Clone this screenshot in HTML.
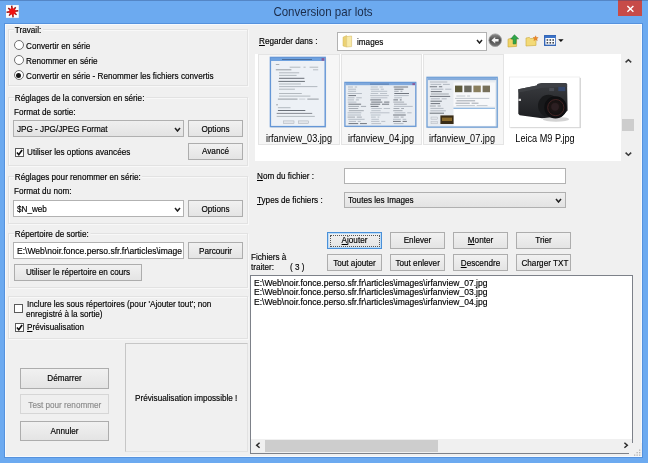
<!DOCTYPE html>
<html lang="fr">
<head>
<meta charset="utf-8">
<title>Conversion par lots</title>
<style>
html,body{margin:0;padding:0;}
body{width:648px;height:463px;overflow:hidden;background:#6caaf0;position:relative;
 font-family:"Liberation Sans","DejaVu Sans",sans-serif;font-size:9.8px;color:#000;}
.abs,.t,.btn,.grp,.fld,.rb,.cb{position:absolute;box-sizing:border-box;}
#win{position:absolute;left:0;top:0;width:648px;height:463px;background:#6caaf0;overflow:hidden;will-change:transform;}
#client{position:absolute;left:5px;top:24px;width:637px;height:433px;background:#f0f0f0;box-shadow:inset 0 0 0 1px #f6fafe, 0 0 0 1px #5592de;}
#title{position:absolute;left:-1px;top:3.8px;width:648px;text-align:center;font-size:12.8px;color:#1b2c4a;transform:scaleX(.9);white-space:nowrap;}
#close{position:absolute;left:618.4px;top:0;width:23.8px;height:15.6px;background:#c74b48;z-index:2;}
.t{-webkit-text-stroke:.18px #000;white-space:nowrap;line-height:13px;font-size:9.8px;transform:scaleX(0.832);transform-origin:0 0;}
.grp{border:1px solid #e2e2e2;box-shadow:inset 1px 1px 0 #f8f8f8, 1px 1px 0 #f8f8f8;}
.btn{border:1px solid #adadad;background:linear-gradient(#f1f1f1,#e4e4e4);white-space:nowrap;font-size:9.8px;line-height:13px;}
.btn span{-webkit-text-stroke:.18px currentColor;position:absolute;left:0;width:100%;text-align:center;transform:scaleX(0.832);}
.btn.dis{border-color:#d6d6d6;background:#efefef;color:#8c8c8c;}
.btn.foc{border-color:#4a90d8;box-shadow:inset 0 0 0 1px #bcdcf8;}
.btn.foc::after{content:"";position:absolute;left:1.5px;top:1.5px;right:1.5px;bottom:1.5px;border:1px dotted #555;}
.fld{border:1px solid #b2b2b2;background:#fff;}
.combo{border:1px solid #b0b0b0;background:linear-gradient(#efefef,#e3e3e3);}
.rb{border:1px solid #707070;border-radius:50%;background:#fff;}
.rb.on::after{content:"";position:absolute;left:50%;top:50%;width:5px;height:5px;margin:-2.5px 0 0 -2.5px;border-radius:50%;background:#151515;}
.cb{border:1px solid #5a5a5a;background:#fff;}
u{text-decoration:underline;}
.lbl{font-size:10.4px;line-height:13px;text-align:center;white-space:nowrap;transform:scaleX(.88);color:#000;}
</style>
</head>
<body>
<div id="win">
 <div class="abs" style="left:0;top:0;width:648px;height:1.2px;background:rgba(40,70,120,.35);z-index:3"></div>
 <div id="title">Conversion par lots</div>
 <div id="close"><svg width="23.8" height="15.6" viewBox="0 0 23.8 15.6"><path d="M9.4 5.9 L15.4 11.7 M15.4 5.9 L9.4 11.7" stroke="#fff" stroke-width="1.4" fill="none"/></svg></div>
 <div id="client"></div>
 <div class="grp" style="left:7.5px;top:28.5px;width:240.0px;height:57.0px;"></div>
 <div class="t" style="left:14px;top:22.90px;background:linear-gradient(transparent 4px,#f0f0f0 4px);padding:0 2px 0 1px">Travail:</div>
 <div class="rb" style="left:13.50px;top:40.20px;width:10.2px;height:10.2px"></div>
 <div class="t" style="left:26px;top:38.70px;">Convertir en série</div>
 <div class="rb" style="left:13.50px;top:55.10px;width:10.2px;height:10.2px"></div>
 <div class="t" style="left:26px;top:53.60px;">Renommer en série</div>
 <div class="rb on" style="left:13.50px;top:70.00px;width:10.2px;height:10.2px"></div>
 <div class="t" style="left:26px;top:68.50px;">Convertir en série - Renommer les fichiers convertis</div>
 <div class="grp" style="left:7.5px;top:96.5px;width:240.0px;height:69.0px;"></div>
 <div class="t" style="left:13.7px;top:90.80px;background:linear-gradient(transparent 4px,#f0f0f0 4px);padding:0 2px 0 1px">Réglages de la conversion en série:</div>
 <div class="t" style="left:14px;top:104.90px;">Format de sortie:</div>
 <div class="combo abs" style="left:13px;top:120px;width:171px;height:17px"></div>
 <div class="t" style="left:17px;top:122.40px;">JPG - JPG/JPEG Format</div>
 <svg class="abs" style="left:173.70px;top:126.90px" width="7.00" height="5.00"><path d="M1 1 L3.50 4.00 L6.00 1" stroke="#222" stroke-width="1.5" fill="none"/></svg>
 <div class="btn" style="left:188px;top:120px;width:55.00px;height:17.00px;"><span style="top:1.10px">Options</span></div>
 <div class="cb" style="left:14.6px;top:147.6px;width:9px;height:9px"></div>
 <svg class="abs" style="left:14.6px;top:147.6px" width="9" height="9" viewBox="0 0 10 10"><path d="M2.2 5 L4.2 7.4 L7.9 2.3" stroke="#111" stroke-width="1.8" fill="none"/></svg>
 <div class="t" style="left:27px;top:144.60px;">Utiliser les options avancées</div>
 <div class="btn" style="left:188px;top:143px;width:55.00px;height:17.00px;"><span style="top:0.20px">Avancé</span></div>
 <div class="grp" style="left:7.5px;top:175.5px;width:240.0px;height:48.0px;"></div>
 <div class="t" style="left:14px;top:169.80px;background:linear-gradient(transparent 4px,#f0f0f0 4px);padding:0 2px 0 1px">Réglages pour renommer en série:</div>
 <div class="t" style="left:14px;top:184.30px;">Format du nom:</div>
 <div class="fld" style="left:13px;top:200px;width:171px;height:17px"></div>
 <div class="t" style="left:16.5px;top:201.60px;">$N_web</div>
 <svg class="abs" style="left:173.70px;top:206.50px" width="7.00" height="5.00"><path d="M1 1 L3.50 4.00 L6.00 1" stroke="#222" stroke-width="1.5" fill="none"/></svg>
 <div class="btn" style="left:188px;top:200px;width:55.00px;height:17.00px;"><span style="top:0.90px">Options</span></div>
 <div class="grp" style="left:7.5px;top:232.5px;width:240.0px;height:55.0px;"></div>
 <div class="t" style="left:14px;top:226.70px;background:linear-gradient(transparent 4px,#f0f0f0 4px);padding:0 2px 0 1px">Répertoire de sortie:</div>
 <div class="fld" style="left:13px;top:242px;width:171px;height:17px"></div>
 <div class="t" style="left:16.5px;top:243.50px;transform:scaleX(.872)">E:\Web\noir.fonce.perso.sfr.fr\articles\image</div>
 <div class="btn" style="left:188px;top:242px;width:55.00px;height:17.00px;"><span style="top:0.50px">Parcourir</span></div>
 <div class="btn" style="left:14px;top:264px;width:128.00px;height:17.00px;"><span style="top:0.20px">Utiliser le répertoire en cours</span></div>
 <div class="grp" style="left:7.5px;top:296px;width:240.0px;height:42.5px;"></div>
 <div class="cb" style="left:14.4px;top:304.2px;width:9px;height:9px"></div>
 <div class="t" style="left:27px;top:297.20px;">Inclure les sous répertoires (pour 'Ajouter tout'; non</div>
 <div class="t" style="left:26.2px;top:307.20px;">enregistré à la sortie)</div>
 <div class="cb" style="left:14.6px;top:322.8px;width:9px;height:9px"></div>
 <svg class="abs" style="left:14.6px;top:322.8px" width="9" height="9" viewBox="0 0 10 10"><path d="M2.2 5 L4.2 7.4 L7.9 2.3" stroke="#111" stroke-width="1.8" fill="none"/></svg>
 <div class="t" style="left:27px;top:320.40px;"><u>P</u>révisualisation</div>
 <div class="grp" style="left:124.5px;top:343px;width:123.0px;height:109px;border-color:#c6c6c6 #e2e2e2 #e2e2e2 #c6c6c6;box-shadow:none"></div>
 <div class="t" style="left:135px;top:391.40px;">Prévisualisation impossible !</div>
 <div class="btn" style="left:20px;top:368px;width:89.00px;height:21.00px;"><span style="top:2.40px">Démarrer</span></div>
 <div class="btn dis" style="left:20px;top:394px;width:89.00px;height:20.00px;"><span style="top:2.70px">Test pour renommer</span></div>
 <div class="btn" style="left:20px;top:421px;width:89.00px;height:20.00px;"><span style="top:1.80px">Annuler</span></div>
 <div class="t" style="left:259px;top:34.20px;"><u>R</u>egarder dans :</div>
 <div class="fld" style="left:337px;top:32px;width:149.5px;height:18.6px"></div>
 <div class="t" style="left:357px;top:34.80px;">images</div>
 <svg class="abs" style="left:476.00px;top:39.30px" width="7.00" height="5.00"><path d="M1 1 L3.50 4.00 L6.00 1" stroke="#222" stroke-width="1.5" fill="none"/></svg>
 <div class="t" style="left:256.8px;top:168.90px;"><u>N</u>om du fichier :</div>
 <div class="fld" style="left:344px;top:168.3px;width:221.5px;height:15.7px"></div>
 <div class="t" style="left:256.8px;top:193.20px;"><u>T</u>ypes de fichiers :</div>
 <div class="combo abs" style="left:344px;top:192.2px;width:221.5px;height:16.2px"></div>
 <div class="t" style="left:347.6px;top:193.20px;">Toutes les Images</div>
 <svg class="abs" style="left:555.00px;top:198.20px" width="7.00" height="5.00"><path d="M1 1 L3.50 4.00 L6.00 1" stroke="#222" stroke-width="1.5" fill="none"/></svg>
 <div class="btn foc" style="left:327px;top:232px;width:55.00px;height:17.00px;"><span style="top:0.10px"><u>A</u>jouter</span></div>
 <div class="btn" style="left:390px;top:232px;width:55.00px;height:17.00px;"><span style="top:0.10px">Enlever</span></div>
 <div class="btn" style="left:453px;top:232px;width:55.00px;height:17.00px;"><span style="top:0.10px"><u>M</u>onter</span></div>
 <div class="btn" style="left:516px;top:232px;width:55.00px;height:17.00px;"><span style="top:0.10px">Trier</span></div>
 <div class="btn" style="left:327px;top:254px;width:55.00px;height:17.00px;"><span style="top:0.50px">Tout ajouter</span></div>
 <div class="btn" style="left:390px;top:254px;width:55.00px;height:17.00px;"><span style="top:0.50px">Tout enlever</span></div>
 <div class="btn" style="left:453px;top:254px;width:55.00px;height:17.00px;"><span style="top:0.50px"><u>D</u>escendre</span></div>
 <div class="btn" style="left:516px;top:254px;width:55.00px;height:17.00px;"><span style="top:0.50px">Charger TXT</span></div>
 <div class="t" style="left:250.6px;top:250.20px;">Fichiers à</div>
 <div class="t" style="left:250.6px;top:259.70px;">traiter:</div>
 <div class="t" style="left:290.3px;top:259.90px;">( 3 )</div>
 <div class="fld" style="left:250px;top:275px;width:383px;height:179px;border-color:#7d8189"></div>
 <div class="t" style="left:253.8px;top:275.60px;transform:scaleX(.872)">E:\Web\noir.fonce.perso.sfr.fr\articles\images\irfanview_07.jpg</div>
 <div class="t" style="left:253.8px;top:285.30px;transform:scaleX(.872)">E:\Web\noir.fonce.perso.sfr.fr\articles\images\irfanview_03.jpg</div>
 <div class="t" style="left:253.8px;top:295.00px;transform:scaleX(.872)">E:\Web\noir.fonce.perso.sfr.fr\articles\images\irfanview_04.jpg</div>
 <svg class="abs" style="left:6.3px;top:5px" width="12.8" height="12.9" viewBox="0 0 13 13"><rect width="13" height="13" fill="#fbfbfb"/>
<path d="M6.5 6.5 L5.78 0.54 M6.5 6.5 L2.25 3.17 M6.5 6.5 L0.54 7.22 M6.5 6.5 L3.17 10.75 M6.5 6.5 L7.22 12.46 M6.5 6.5 L10.75 9.83 M6.5 6.5 L12.46 5.78 M6.5 6.5 L9.83 2.25 " stroke="#8c1010" stroke-width="1.5" fill="none"/><path d="M6.5 6.5 L5.78 0.54 M6.5 6.5 L2.25 3.17 M6.5 6.5 L0.54 7.22 M6.5 6.5 L3.17 10.75 M6.5 6.5 L7.22 12.46 M6.5 6.5 L10.75 9.83 M6.5 6.5 L12.46 5.78 M6.5 6.5 L9.83 2.25 " stroke="#e81414" stroke-width="0.9" fill="none" stroke-dasharray="4.3 9"/>
<circle cx="6.5" cy="6.6" r="3.3" fill="#ee1212"/></svg>
 <div class="abs" style="left:254.8px;top:53.5px;width:380px;height:107.3px;background:#fff"></div>
 <div class="abs" style="left:258.2px;top:54px;width:81.8px;height:90.8px;background:#f6f6f6;border:1px solid #e4e4e4"></div>
 <div class="abs" style="left:340.8px;top:54px;width:81.0px;height:90.8px;background:#f6f6f6;border:1px solid #e4e4e4"></div>
 <div class="abs" style="left:422.6px;top:54px;width:81.0px;height:90.8px;background:#f6f6f6;border:1px solid #e4e4e4"></div>
 <svg class="abs" style="left:268px;top:55px;overflow:visible" width="60" height="75" viewBox="268 55 60 75"><rect x="271.2" y="58.4" width="55" height="69.2" fill="#c4c8ce" opacity=".5"/><rect x="270.4" y="57.4" width="54.8" height="69.2" fill="#edf1f6" stroke="#6496d6" stroke-width="1.4"/><rect x="271" y="58" width="53.6" height="3" fill="#6fa2df"/><path d="M282 59.5 H312" stroke="#3c5a86" stroke-width=".9" opacity=".8"/><rect x="321.6" y="58.1" width="2.8" height="2.6" fill="#8a5a9a"/><path d="M275.8 64.5 H279.3" stroke="#8a9098" stroke-width="0.7"/><path d="M289.7 67.2 H300.4" stroke="#9aa0a8" stroke-width="0.7"/><path d="M303.5 67.2 H305.6" stroke="#9aa0a8" stroke-width="0.7"/><path d="M309.6 67.2 H318.2" stroke="#9aa0a8" stroke-width="0.7"/><path d="M275.8 69.8 H291.4" stroke="#80868e" stroke-width="0.8"/><path d="M313.0 69.8 H318.2" stroke="#a0a6ae" stroke-width="0.7"/><path d="M279.0 72.8 H299.2" stroke="#9aa0a8" stroke-width="0.7"/><path d="M279.0 75.4 H296.6" stroke="#9aa0a8" stroke-width="0.7"/><path d="M279.0 78.3 H304.4" stroke="#6a7078" stroke-width="1.0"/><path d="M278.4 81.4 H304.9" stroke="#6a7078" stroke-width="1.0"/><path d="M279.0 84.0 H300.9" stroke="#9aa0a8" stroke-width="0.7"/><path d="M279.0 86.6 H317.4" stroke="#9aa0a8" stroke-width="0.7"/><path d="M279.0 89.2 H294.9" stroke="#9aa0a8" stroke-width="0.7"/><path d="M279.0 93.5 H301.8" stroke="#9aa0a8" stroke-width="0.7"/><path d="M279.0 96.1 H310.4" stroke="#9aa0a8" stroke-width="0.7"/><path d="M277.9 99.1 H297.5" stroke="#80868e" stroke-width="0.8"/><path d="M299.2 99.1 H305.3" stroke="#b0b6be" stroke-width="0.6"/><path d="M307.3 99.1 H318.7" stroke="#80868e" stroke-width="0.8"/><path d="M276.2 104.8 H277.9" stroke="#80868e" stroke-width="0.8"/><path d="M277.9 107.7 H290.5" stroke="#9aa0a8" stroke-width="0.7"/><path d="M277.9 110.5 H305.3" stroke="#6a7078" stroke-width="1.0"/><path d="M276.7 113.4 H312.2" stroke="#7a8088" stroke-width="0.9"/><path d="M276.7 116.4 H314.8" stroke="#9aa0a8" stroke-width="0.7"/><rect x="283.6" y="120.9" width="10.4" height="2.6" fill="#e2e5ea" stroke="#a8aeb6" stroke-width=".5"/><rect x="298.3" y="120.9" width="10.4" height="2.6" fill="#e2e5ea" stroke="#a8aeb6" stroke-width=".5"/></svg>
 <svg class="abs" style="left:343px;top:80.4px;overflow:visible" width="76" height="50" viewBox="343 80 76 50"><rect x="345.6" y="83.4" width="71" height="43.9" fill="#c9ccd0" opacity=".55"/><rect x="344.9" y="82.4" width="70.9" height="43.9" fill="#e9edf2" stroke="#6a9ad6" stroke-width="1.3"/><rect x="345.5" y="83" width="69.7" height="2.2" fill="#7fa8dc"/><path d="M370 84.1 H389" stroke="#3c5a86" stroke-width=".8" opacity=".7"/><rect x="412.4" y="83.1" width="2.6" height="2" fill="#8a5a9a"/><path d="M348.0 87.0 H353.0 M354.8 87.0 H357.1" stroke="#a3abb5" stroke-width="0.75"/><path d="M348.0 89.2 H356.0" stroke="#a3abb5" stroke-width="0.75"/><path d="M348.2 91.3 H356.1" stroke="#a3abb5" stroke-width="0.75"/><path d="M347.6 93.5 H361.9" stroke="#a3abb5" stroke-width="0.75"/><path d="M348.4 95.6 H356.0" stroke="#70767f" stroke-width="1.00"/><path d="M347.8 97.8 H354.5 M356.3 97.8 H361.8" stroke="#a3abb5" stroke-width="0.75"/><path d="M347.7 99.9 H354.0 M355.8 99.9 H358.9" stroke="#a3abb5" stroke-width="0.75"/><path d="M347.8 102.1 H356.4" stroke="#a3abb5" stroke-width="0.75"/><path d="M348.4 104.2 H361.1" stroke="#70767f" stroke-width="1.00"/><path d="M348.2 106.4 H359.1 M360.9 106.4 H366.1" stroke="#8d949d" stroke-width="0.75"/><path d="M348.5 108.5 H358.2" stroke="#8d949d" stroke-width="0.75"/><path d="M348.8 110.7 H363.8" stroke="#8d949d" stroke-width="0.75"/><path d="M347.6 112.8 H361.3" stroke="#a3abb5" stroke-width="0.75"/><path d="M347.7 115.0 H361.0" stroke="#a3abb5" stroke-width="0.75"/><path d="M347.6 117.1 H355.0 M356.8 117.1 H361.8" stroke="#8d949d" stroke-width="0.75"/><path d="M348.2 119.3 H364.6" stroke="#a3abb5" stroke-width="0.75"/><path d="M348.9 121.4 H356.0 M357.8 121.4 H360.8" stroke="#a3abb5" stroke-width="0.75"/><path d="M348.5 123.6 H358.2 M360.0 123.6 H366.9" stroke="#70767f" stroke-width="1.00"/><path d="M370.7 87.0 H377.8 M379.6 87.0 H382.8" stroke="#a9b1bb" stroke-width="0.75"/><path d="M370.5 89.2 H379.0 M380.8 89.2 H383.9" stroke="#a9b1bb" stroke-width="0.75"/><path d="M371.1 91.3 H387.2" stroke="#a9b1bb" stroke-width="0.75"/><path d="M370.7 93.5 H378.2 M380.0 93.5 H387.1" stroke="#a9b1bb" stroke-width="0.75"/><path d="M370.2 95.6 H388.9" stroke="#a9b1bb" stroke-width="0.75"/><path d="M370.6 97.8 H387.4" stroke="#a9b1bb" stroke-width="0.75"/><path d="M370.3 99.9 H381.0" stroke="#70767f" stroke-width="1.00"/><path d="M371.2 102.1 H382.3 M384.1 102.1 H389.4" stroke="#70767f" stroke-width="1.00"/><path d="M370.3 104.2 H380.2 M382.0 104.2 H389.1" stroke="#70767f" stroke-width="1.00"/><path d="M370.7 106.4 H378.5" stroke="#70767f" stroke-width="1.00"/><path d="M371.3 108.5 H381.9 M383.7 108.5 H390.1" stroke="#a9b1bb" stroke-width="0.75"/><path d="M371.3 110.7 H380.7" stroke="#a9b1bb" stroke-width="0.75"/><path d="M370.2 112.8 H389.5" stroke="#a9b1bb" stroke-width="0.75"/><path d="M370.8 115.0 H380.6" stroke="#a9b1bb" stroke-width="0.75"/><path d="M371.0 117.1 H375.8 M377.6 117.1 H379.3" stroke="#a9b1bb" stroke-width="0.75"/><path d="M371.4 119.3 H378.9" stroke="#a9b1bb" stroke-width="0.75"/><path d="M371.1 121.4 H379.5 M381.3 121.4 H385.3" stroke="#a9b1bb" stroke-width="0.75"/><path d="M371.4 123.6 H381.1" stroke="#a9b1bb" stroke-width="0.75"/><path d="M393.7 87.0 H408.1" stroke="#70767f" stroke-width="1.00"/><path d="M394.3 89.2 H403.5" stroke="#70767f" stroke-width="1.00"/><path d="M394.2 91.3 H398.7 M400.5 91.3 H402.4" stroke="#8d949d" stroke-width="0.75"/><path d="M394.3 93.5 H409.0" stroke="#70767f" stroke-width="1.00"/><path d="M394.0 95.6 H408.8" stroke="#a3abb5" stroke-width="0.75"/><path d="M394.2 97.8 H402.0" stroke="#a3abb5" stroke-width="0.75"/><path d="M393.4 99.9 H398.0 M399.8 99.9 H401.6" stroke="#70767f" stroke-width="1.00"/><path d="M393.3 102.1 H404.1" stroke="#8d949d" stroke-width="0.75"/><path d="M394.0 104.2 H406.8" stroke="#8d949d" stroke-width="0.75"/><path d="M393.8 106.4 H412.7" stroke="#a3abb5" stroke-width="0.75"/><path d="M393.5 108.5 H399.4 M401.2 108.5 H404.0" stroke="#8d949d" stroke-width="0.75"/><path d="M393.2 110.7 H402.5" stroke="#8d949d" stroke-width="0.75"/><path d="M394.4 112.8 H405.4 M407.2 112.8 H411.6" stroke="#a3abb5" stroke-width="0.75"/><path d="M393.1 115.0 H405.8" stroke="#70767f" stroke-width="1.00"/><path d="M393.8 117.1 H398.9 M400.7 117.1 H403.6" stroke="#8d949d" stroke-width="0.75"/><path d="M393.0 119.3 H400.8 M402.6 119.3 H406.2" stroke="#a3abb5" stroke-width="0.75"/><path d="M393.0 121.4 H400.8 M402.6 121.4 H406.9" stroke="#70767f" stroke-width="1.00"/><path d="M393.7 123.6 H403.5" stroke="#a3abb5" stroke-width="0.75"/></svg>
 <svg class="abs" style="left:425px;top:74.6px;overflow:visible" width="76" height="56" viewBox="425 74 76 56"><rect x="427.8" y="77.3" width="70.4" height="49.8" fill="#c9ccd0" opacity=".55"/><rect x="427" y="76.3" width="70.2" height="49.8" fill="#e8ecf1" stroke="#6f9fd6" stroke-width="1.3"/><rect x="427.6" y="76.9" width="69" height="2.2" fill="#86addd"/><rect x="453.5" y="81.5" width="41.5" height="24" fill="#f7f8fa"/><rect x="453.5" y="108" width="41.5" height="16.8" fill="#ffffff"/><path d="M453.5 107.3 H495" stroke="#7fb0e0" stroke-width="1"/><rect x="455.0" y="84.6" width="7.4" height="6.6" fill="#5e5a3c"/><rect x="464.2" y="84.6" width="7.4" height="6.6" fill="#6b6a60"/><rect x="473.4" y="84.6" width="7.4" height="6.6" fill="#8a7f5e"/><rect x="482.6" y="84.6" width="7.4" height="6.6" fill="#77705a"/><path d="M429.9 81.0 H447.3" stroke="#a3abb5" stroke-width="0.80"/><path d="M430.5 83.4 H441.2 M443.0 83.4 H449.8" stroke="#a3abb5" stroke-width="0.80"/><path d="M429.8 85.8 H437.1 M438.9 85.8 H442.2" stroke="#70767f" stroke-width="1.05"/><path d="M431.0 88.2 H443.4 M445.2 88.2 H451.4" stroke="#a3abb5" stroke-width="0.80"/><path d="M430.8 90.6 H441.8" stroke="#70767f" stroke-width="1.05"/><path d="M430.9 93.0 H448.8" stroke="#8d949d" stroke-width="0.80"/><path d="M429.9 95.4 H450.2" stroke="#70767f" stroke-width="1.05"/><path d="M430.8 97.8 H439.9 M441.7 97.8 H446.7" stroke="#a3abb5" stroke-width="0.80"/><path d="M430.5 100.2 H441.8" stroke="#70767f" stroke-width="1.05"/><path d="M430.6 102.6 H440.1" stroke="#70767f" stroke-width="1.05"/><path d="M429.9 105.0 H435.8 M437.6 105.0 H440.7" stroke="#8d949d" stroke-width="0.80"/><path d="M430.4 107.4 H443.5" stroke="#a3abb5" stroke-width="0.80"/><path d="M430.3 109.8 H445.8" stroke="#a3abb5" stroke-width="0.80"/><path d="M429.7 112.2 H444.0" stroke="#70767f" stroke-width="1.05"/><path d="M456.4 95.0 H465.3 M467.1 95.0 H470.1" stroke="#b3bac3" stroke-width="0.80"/><path d="M455.0 97.4 H489.3" stroke="#b3bac3" stroke-width="0.80"/><path d="M456.5 99.8 H475.1" stroke="#8d949d" stroke-width="0.80"/><path d="M455.5 102.2 H469.8 M471.6 102.2 H478.5" stroke="#8d949d" stroke-width="0.80"/><path d="M456.3 104.6 H474.9 M476.7 104.6 H487.5" stroke="#b3bac3" stroke-width="0.80"/><rect x="440.4" y="114.4" width="13.2" height="8.6" fill="#3a2c16"/><rect x="442" y="116.6" width="10" height="3.4" fill="#8a6a2c"/><rect x="431" y="116" width="6.5" height="2.4" fill="#dfe3e8" stroke="#aab0b8" stroke-width=".4"/><rect x="431" y="120.4" width="6.5" height="2.4" fill="#dfe3e8" stroke="#aab0b8" stroke-width=".4"/></svg>
 <svg class="abs" style="left:507px;top:75px;overflow:visible" width="76" height="56" viewBox="507 75 76 56"><defs><radialGradient id="lens" cx=".45" cy=".45" r=".6"><stop offset="0" stop-color="#4a2a2a"/><stop offset=".45" stop-color="#1c1414"/><stop offset="1" stop-color="#0e0e0e"/></radialGradient><linearGradient id="cb" x1="0" y1="0" x2="0" y2="1"><stop offset="0" stop-color="#3a3c40"/><stop offset="1" stop-color="#1d1e21"/></linearGradient></defs><rect x="510.4" y="77.9" width="70.2" height="50.2" fill="#a8a8a8" opacity=".8"/><rect x="509.5" y="77" width="70.3" height="50.3" fill="#fff" stroke="#e3e3e3" stroke-width=".6"/><ellipse cx="556" cy="119.3" rx="13" ry="2.4" fill="#c8c8c8" opacity=".8"/><path d="M518.3 89.2 L528.1 87.3 L536.8 85.6 L537.6 84.0 L542.1 82.9 L565.7 82.9 L567.1 84.0 L567.6 110.4 L561.8 116.3 L542.1 118.2 L519.7 115.2 L518.3 113.8 Z" fill="url(#cb)"/><path d="M518.3 89.2 L528.1 87.3 L536.8 85.6 L537.6 84.0 L542.1 82.9 L565.7 82.9 L567.1 84.0 L567.1 87.1 L542.1 87.7 L536.8 89.0 L518.5 92.5 Z" fill="#3f4146" opacity=".9"/><rect x="558.3" y="86.9" width="7.0" height="4.2" fill="#34466a"/><rect x="549.2" y="88.0" width="4.9" height="3.1" fill="#484b52"/><rect x="518.5" y="98.8" width="2.5" height="2.2" fill="#d0d0d0"/><ellipse cx="548.5" cy="105.8" rx="10.5" ry="11.0" fill="#18191b"/><circle cx="555.5" cy="107.4" r="11.2" fill="#0f0f11"/><circle cx="555.8" cy="107.6" r="8.1" fill="url(#lens)" stroke="#4a2626" stroke-width=".9"/><circle cx="555.1" cy="106.8" r="3.7" fill="#2c1f22"/></svg>
 <div class="abs lbl" style="left:248.7px;top:131.9px;width:100px">irfanview_03.jpg</div>
 <div class="abs lbl" style="left:330.7px;top:131.9px;width:100px">irfanview_04.jpg</div>
 <div class="abs lbl" style="left:412.2px;top:131.9px;width:100px">irfanview_07.jpg</div>
 <div class="abs lbl" style="left:494.5px;top:131.9px;width:100px">Leica M9 P.jpg</div>
 <div class="abs" style="left:621px;top:53.5px;width:13.8px;height:107.3px;background:#f0f0f0"></div>
 <div class="abs" style="left:621.6px;top:118.6px;width:12.6px;height:12.2px;background:#cdcdcd"></div>
 <svg class="abs" style="left:623.5px;top:58px" width="9" height="6"><path d="M1.6 4.4 L4.4 1.7 L7.2 4.4" stroke="#3a3a3a" stroke-width="1.5" fill="none"/></svg>
 <svg class="abs" style="left:623.5px;top:150.5px" width="9" height="6"><path d="M1.6 1.6 L4.4 4.3 L7.2 1.6" stroke="#3a3a3a" stroke-width="1.5" fill="none"/></svg>
 <svg class="abs" style="left:342px;top:34.5px" width="11" height="13" viewBox="0 0 11 13"><path d="M1 2.2 L4.6 0.6 L4.6 12 L1 11 Z" fill="#ecd274"/><path d="M4.6 1.6 L9.6 1 L9.6 11.6 L4.6 12 Z" fill="#f8eaa8"/><path d="M1 2.2 L4.6 0.6 L4.6 12 L1 11 Z M4.6 1.6 L9.6 1 L9.6 11.6 L4.6 12" fill="none" stroke="#d2b458" stroke-width=".5"/></svg>
 <svg class="abs" style="left:488px;top:33.1px" width="14.4" height="14.4" viewBox="0 0 14.4 14.4"><defs><linearGradient id="bk" x1="0" y1="0" x2="0" y2="1"><stop offset="0" stop-color="#8c8c8c"/><stop offset=".5" stop-color="#4c4c4c"/><stop offset="1" stop-color="#767676"/></linearGradient></defs><circle cx="7.2" cy="7.2" r="6.3" fill="url(#bk)" stroke="#9a9a9a" stroke-width=".8"/><path d="M3.4 7.2 L7.2 3.9 L7.2 6 L10.6 6 L10.6 8.4 L7.2 8.4 L7.2 10.5 Z" fill="#f4f4f4"/></svg>
 <svg class="abs" style="left:507px;top:33.5px" width="13" height="14" viewBox="0 0 13 14"><path d="M1 5.2 L4 4.2 L5 5.2 L9.6 4.6 L9.6 12.4 L1 13 Z" fill="#f0d468" stroke="#c6a436" stroke-width=".6"/><path d="M7.4 0.8 L11.6 4.8 L9.2 4.8 L9 9.8 L6.2 10 L6.2 5 L3.8 5 Z" fill="#2fa84a" stroke="#1c7a30" stroke-width=".6"/></svg>
 <svg class="abs" style="left:525px;top:34.5px" width="14" height="12" viewBox="0 0 14 12"><path d="M1 3 L4.4 2.4 L5.4 3.6 L11 3 L11 10.4 L1 11 Z" fill="#f3da78" stroke="#c9a83e" stroke-width=".6"/><path d="M10.6 0.8 L11.3 2.6 L13.2 2.6 L11.7 3.8 L12.3 5.6 L10.6 4.5 L8.9 5.6 L9.5 3.8 L8 2.6 L9.9 2.6 Z" fill="#f08a28" stroke="#d06a14" stroke-width=".4"/></svg>
 <svg class="abs" style="left:543.6px;top:34.8px" width="12.6" height="11" viewBox="0 0 12.6 11"><rect x=".7" y=".7" width="11.2" height="9.6" fill="#fdfdfd" stroke="#2b5fb4" stroke-width="1.3"/><rect x="1" y="1" width="10.6" height="2" fill="#3a72c8"/><g fill="#3c4654"><rect x="2.6" y="4.2" width="1.6" height="1.6"/><rect x="5.5" y="4.2" width="1.6" height="1.6"/><rect x="8.4" y="4.2" width="1.6" height="1.6"/><rect x="2.6" y="7" width="1.6" height="1.6"/><rect x="5.5" y="7" width="1.6" height="1.6"/><rect x="8.4" y="7" width="1.6" height="1.6"/></g></svg>
 <svg class="abs" style="left:557.8px;top:39px" width="6" height="3.4"><path d="M0.2 0.2 H5.6 L2.9 3 Z" fill="#111"/></svg>
 <div class="abs" style="left:251px;top:439px;width:381px;height:14px;background:#f0f0f0"></div>
 <div class="abs" style="left:265px;top:439.6px;width:173px;height:12px;background:#cdcdcd"></div>
 <svg class="abs" style="left:255.3px;top:441.3px" width="6" height="9"><path d="M4.6 1.8 L1.7 4.3 L4.6 6.8" stroke="#2a2a2a" stroke-width="1.5" fill="none"/></svg>
 <svg class="abs" style="left:623px;top:441px" width="6" height="9"><path d="M1.4 1.8 L4.3 4.3 L1.4 6.8" stroke="#2a2a2a" stroke-width="1.5" fill="none"/></svg>
 <div class="abs" style="left:629px;top:443px;width:13px;height:13px;background:#f0f0f0"></div>
 <svg class="abs" style="left:632.6px;top:447.6px" width="8" height="8"><rect x="6" y="1.5" width="1.3" height="1.3" fill="#b4b4b4"/><rect x="6" y="4" width="1.3" height="1.3" fill="#b4b4b4"/><rect x="3.5" y="4" width="1.3" height="1.3" fill="#b4b4b4"/><rect x="6" y="6.5" width="1.3" height="1.3" fill="#b4b4b4"/><rect x="3.5" y="6.5" width="1.3" height="1.3" fill="#b4b4b4"/><rect x="1" y="6.5" width="1.3" height="1.3" fill="#b4b4b4"/></svg>
</div>
</body>
</html>
